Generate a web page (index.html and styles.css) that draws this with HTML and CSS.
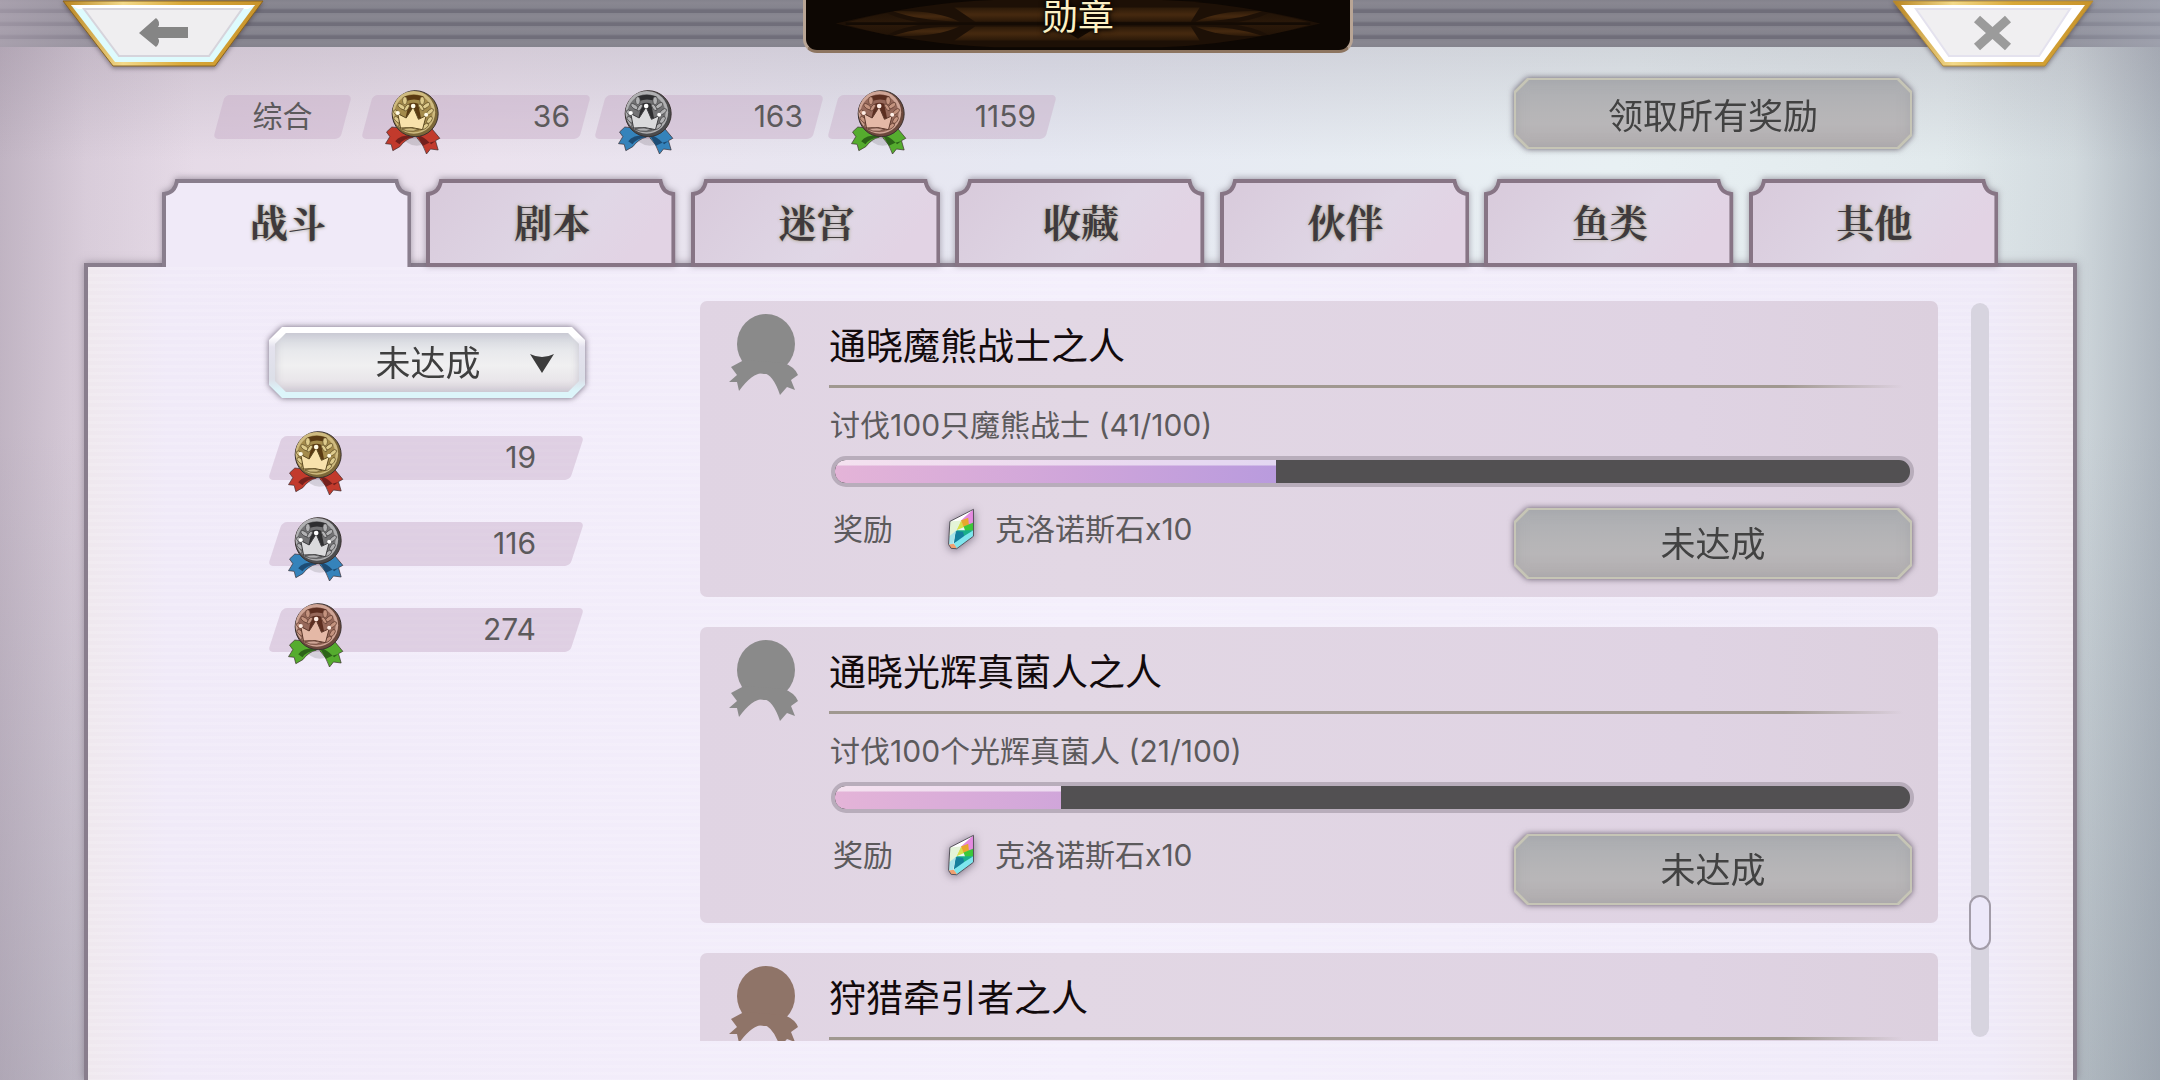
FILE: index.html
```html
<!DOCTYPE html>
<html lang="zh-CN">
<head>
    <meta charset="UTF-8">
    <meta name="viewport" content="width=device-width, initial-scale=1.0">
    <title>勋章</title>
    <link rel="stylesheet" href="styles.css">
</head>
<body>
    <!-- Shared icons -->
    <svg class="sprite" aria-hidden="true">
        <defs>
            <linearGradient id="gold-frame" x1="0" y1="0" x2="1" y2="0">
                <stop offset="0" stop-color="#b88420"/>
                <stop offset="0.3" stop-color="#f3d98a"/>
                <stop offset="0.6" stop-color="#d9a838"/>
                <stop offset="1" stop-color="#c8932b"/>
            </linearGradient>
            <linearGradient id="tab-fill" x1="0" y1="0" x2="1" y2="0.3">
                <stop offset="0" stop-color="#d8cadb"/>
                <stop offset="0.7" stop-color="#e0d7e6"/>
                <stop offset="1" stop-color="#e2d3e4"/>
            </linearGradient>
            <linearGradient id="ornament-fill" x1="0" y1="0" x2="0" y2="1">
                <stop offset="0" stop-color="#2c1a09"/>
                <stop offset="0.45" stop-color="#44280f"/>
                <stop offset="0.55" stop-color="#44280f"/>
                <stop offset="1" stop-color="#2a1808"/>
            </linearGradient>
        </defs>

        <symbol id="medal" viewBox="164 390 170 198">
            <ellipse cx="262" cy="530" rx="40" ry="30" fill="#000" opacity="0.12"/>
            <g fill="var(--ribbon)" stroke="#3a2a2c" stroke-width="2" stroke-linejoin="round">
                <path d="M187 504L171 519L181 533L168 554L185 556L190 575L211 563Q228 540 252 534L240 510Z"/>
                <path d="M302 503L331 538L318 545L326 573L303 570L291 585Q282 555 262 536L270 510Z"/>
            </g>
            <path d="M197 547Q210 528 250 528L252 535Q222 538 210 556Z" fill="var(--ribbon-dark)"/>
            <path d="M262 528Q282 530 305 556L318 546Q300 550 280 560Z" fill="var(--ribbon-dark)"/>
            <circle cx="257" cy="464" r="69" fill="var(--edge)" stroke="#3a3230" stroke-width="3"/>
            <circle cx="253" cy="460" r="64" fill="var(--rim)"/>
            <circle cx="252" cy="463" r="57" fill="var(--face)"/>
            <path d="M226 412Q252 403 282 412L279 426Q252 417 231 426Z" fill="var(--deep)"/>
            <path d="M238 434Q252 428 266 434L276 485H226Z" fill="var(--deep)"/>
            <g fill="var(--leaf)" stroke="var(--line)" stroke-width="2">
                <ellipse cx="226" cy="425" rx="7" ry="12"/>
                <ellipse cx="278" cy="425" rx="7" ry="12"/>
                <ellipse cx="216" cy="443" rx="6" ry="13" transform="rotate(-55 216 443)"/>
                <ellipse cx="232" cy="446" rx="5" ry="12" transform="rotate(35 232 446)"/>
                <ellipse cx="290" cy="440" rx="6" ry="13" transform="rotate(55 290 440)"/>
                <ellipse cx="275" cy="445" rx="5" ry="12" transform="rotate(-35 275 445)"/>
                <ellipse cx="202" cy="462" rx="6" ry="12" transform="rotate(-50 202 462)"/>
                <ellipse cx="302" cy="458" rx="6" ry="12" transform="rotate(50 302 458)"/>
                <ellipse cx="203" cy="482" rx="6" ry="12" transform="rotate(-45 203 482)"/>
                <ellipse cx="300" cy="483" rx="6" ry="12" transform="rotate(35 300 483)"/>
                <ellipse cx="218" cy="505" rx="6" ry="12" transform="rotate(-60 218 505)"/>
                <ellipse cx="287" cy="502" rx="6" ry="12" transform="rotate(50 287 502)"/>
            </g>
            <path d="M205 464L230 477L251 444L267 481L290 470L279 512Q248 502 213 507Z" fill="var(--crown)" stroke="var(--line)" stroke-width="3" stroke-linejoin="round"/>
            <path d="M218 509Q246 503 268 512Q252 519 232 516Z" fill="var(--rim)" stroke="var(--line)" stroke-width="2"/>
            <g fill="var(--shine)">
                <circle cx="205" cy="462" r="6"/>
                <circle cx="251" cy="441" r="7"/>
                <circle cx="290" cy="467" r="6"/>
            </g>
        </symbol>

        <symbol id="medal-shape" viewBox="39 24 70 82">
            <ellipse cx="76" cy="54" rx="29" ry="30"/>
            <path d="M54 70L41 77L47 85L39 92L47 92L49 101Q62 83 73 83Q83 84 90 105L97 97L105 100L101 90L108 85Q105 77 94 73Z"/>
        </symbol>

        <symbol id="gem" viewBox="56 54 84 128">
            <path d="M136 58L64 95L60 165L68 177L85 178L136 140Z" fill="#e8f6f4"/>
            <path d="M136 58L64 95L66 130L98 92Z" fill="#ffffff"/>
            <path d="M136 58L98 92L116 105L136 112Z" fill="#e58ae0"/>
            <path d="M98 92L84 122L108 112Z" fill="#d8e04c"/>
            <path d="M98 92L120 84L122 106L106 112Z" fill="#e8a72c"/>
            <path d="M106 110L136 98V122L112 128Z" fill="#3cc83a"/>
            <path d="M64 95L98 92L80 130L62 150Z" fill="#e4f4d8"/>
            <path d="M84 122L110 122L136 122L118 140L92 142Z" fill="#18b08a"/>
            <path d="M82 124L104 126L110 146L76 162Z" fill="#147f9c"/>
            <path d="M110 138L136 122V140L85 178L76 162Z" fill="#7ee6ee"/>
            <path d="M62 140L82 124L74 164L60 165Z" fill="#a7e4ea"/>
            <path d="M60 165L76 163L86 177L68 177Z" fill="#f0a070"/>
            <path d="M136 58L64 95L60 165L68 177L85 178L136 140Z" fill="none" stroke="#55505a" stroke-width="3" stroke-linejoin="round"/>
        </symbol>

        <symbol id="tab-shape" viewBox="0 0 250 88" preserveAspectRatio="none">
            <path d="M2 86V15Q13 14 15 2H235Q237 14 248 15V86Z" fill="url(#tab-fill)" stroke="#877585" stroke-width="4"/>
        </symbol>
        <symbol id="tab-shape-active" viewBox="0 0 250 88" preserveAspectRatio="none">
            <path d="M2 88V15Q13 14 15 2H235Q237 14 248 15V88" fill="#f0eaf8" stroke="#897e8d" stroke-width="4"/>
        </symbol>
    </svg>

    <header class="topbar">
        <button class="corner-btn" type="button" aria-label="返回">
            <svg viewBox="0 0 202 68">
                <path d="M1 1H201L153 66H51Z" fill="url(#gold-frame)" stroke="#8a6420" stroke-width="1"/>
                <path d="M9 5H193L151 62H53Z" fill="#defbfd"/>
                <path d="M9 5H193L186 9H16Z" fill="#fff"/>
                <path d="M22 9H180L147 56H57Z" fill="#efeef0" stroke="#d6d4dc" stroke-width="2"/>
                <path d="M77 33L94 18Q99 22 96 27H126V38H96Q99 42 94 47Z" fill="#858585"/>
            </svg>
        </button>
        <div class="banner">
            <svg class="banner-art" viewBox="0 0 550 53" preserveAspectRatio="none" aria-hidden="true">
                <path d="M30 25Q120 2 190 0H360Q430 2 520 25Q430 48 360 50H190Q120 48 30 25Z" fill="#1d1006"/>
                <g fill="url(#ornament-fill)">
                    <path d="M150 8H398L389 23H171Z"/>
                    <path d="M150 43H398L389 28H171Z"/>
                    <path d="M88 12Q130 10 155 23Q115 22 88 12Z"/>
                    <path d="M88 38Q130 40 155 28Q115 28 88 38Z"/>
                    <path d="M461 12Q420 10 394 23Q434 22 461 12Z"/>
                    <path d="M461 38Q420 40 394 28Q434 28 461 38Z"/>
                    <path d="M40 24Q60 18 82 14Q98 22 125 25Q98 28 82 37Q60 32 40 26Z" opacity="0.35"/>
                    <path d="M510 24Q490 18 468 14Q452 22 425 25Q452 28 468 37Q490 32 510 26Z" opacity="0.35"/>
                </g>
                <path d="M40 25H510" stroke="#140b04" stroke-width="3"/>
                <path d="M255 28L275 41L295 28Z" fill="#140b04"/>
            </svg>
            <h1>勋章</h1>
        </div>
        <button class="corner-btn" type="button" aria-label="关闭">
            <svg viewBox="0 0 202 68">
                <path d="M1 1H201L153 66H51Z" fill="url(#gold-frame)" stroke="#b08a3a" stroke-width="1"/>
                <path d="M9 5H193L151 62H53Z" fill="#fff"/>
                <path d="M24 9H178L147 56H57Z" fill="#f0eff1" stroke="#e4e2ee" stroke-width="2"/>
                <path d="M85 19L116 47M116 19L85 47" stroke="#9b9b9b" stroke-width="9" fill="none"/>
            </svg>
        </button>
    </header>

    <section class="summary">
        <div class="totals">
            <div class="chip chip-label"><span>综合</span></div>
            <div class="chip"><svg class="medal gold"><use href="#medal"/></svg><span>36</span></div>
            <div class="chip"><svg class="medal silver"><use href="#medal"/></svg><span>163</span></div>
            <div class="chip"><svg class="medal bronze"><use href="#medal"/></svg><span>1159</span></div>
        </div>
        <button class="plate" type="button" disabled><span>领取所有奖励</span></button>
    </section>

    <nav class="tabs">
        <button class="tab active" type="button"><svg><use href="#tab-shape-active"/></svg><span>战斗</span></button>
        <button class="tab" type="button"><svg><use href="#tab-shape"/></svg><span>剧本</span></button>
        <button class="tab" type="button"><svg><use href="#tab-shape"/></svg><span>迷宫</span></button>
        <button class="tab" type="button"><svg><use href="#tab-shape"/></svg><span>收藏</span></button>
        <button class="tab" type="button"><svg><use href="#tab-shape"/></svg><span>伙伴</span></button>
        <button class="tab" type="button"><svg><use href="#tab-shape"/></svg><span>鱼类</span></button>
        <button class="tab" type="button"><svg><use href="#tab-shape"/></svg><span>其他</span></button>
    </nav>

    <main class="panel">
        <aside class="sidebar">
            <div class="filter">
                <select aria-label="筛选">
                    <option>未达成</option>
                </select>
                <svg class="filter-arrow" viewBox="0 0 24 20" aria-hidden="true"><path d="M0 0Q12 6 24 0L12 19Z" fill="#3c3c3c"/></svg>
            </div>
            <div class="chip"><svg class="medal gold"><use href="#medal"/></svg><span>19</span></div>
            <div class="chip"><svg class="medal silver"><use href="#medal"/></svg><span>116</span></div>
            <div class="chip"><svg class="medal bronze"><use href="#medal"/></svg><span>274</span></div>
        </aside>

        <div class="list">
            <article class="card">
                <svg class="card-medal"><use href="#medal-shape"/></svg>
                <div class="card-body">
                    <h2>通晓魔熊战士之人</h2>
                    <p class="goal">讨伐100只魔熊战士 (41/100)</p>
                    <div class="bar" role="progressbar" aria-valuenow="41" aria-valuemax="100"><div class="bar-fill" style="width: 41%"></div></div>
                    <div class="reward">
                        <span class="reward-label">奖励</span>
                        <svg class="gem"><use href="#gem"/></svg>
                        <span>克洛诺斯石x10</span>
                        <button class="plate" type="button" disabled><span>未达成</span></button>
                    </div>
                </div>
            </article>

            <article class="card">
                <svg class="card-medal"><use href="#medal-shape"/></svg>
                <div class="card-body">
                    <h2>通晓光辉真菌人之人</h2>
                    <p class="goal">讨伐100个光辉真菌人 (21/100)</p>
                    <div class="bar" role="progressbar" aria-valuenow="21" aria-valuemax="100"><div class="bar-fill" style="width: 21%"></div></div>
                    <div class="reward">
                        <span class="reward-label">奖励</span>
                        <svg class="gem"><use href="#gem"/></svg>
                        <span>克洛诺斯石x10</span>
                        <button class="plate" type="button" disabled><span>未达成</span></button>
                    </div>
                </div>
            </article>

            <article class="card card-bronze">
                <svg class="card-medal"><use href="#medal-shape"/></svg>
                <div class="card-body">
                    <h2>狩猎牵引者之人</h2>
                </div>
            </article>
        </div>

        <div class="scrollbar"><div class="scroll-thumb"></div></div>
    </main>
</body>
</html>
```
FILE: styles.css
```css
* {
    box-sizing: border-box;
}
body {
    margin: 0;
    height: 100vh;
    overflow: hidden;
    display: flex;
    flex-direction: column;
    font-family: Inter, "Noto Sans CJK SC", sans-serif;
    font-size: 30px;
    color: #5c5a5c;
    background:
        linear-gradient(to bottom, rgba(120,110,125,0.2) 47px, transparent 160px),
        linear-gradient(to right, rgba(150,138,155,0.45), rgba(150,138,155,0.15) 4%, transparent 9%),
        linear-gradient(to left, rgba(130,138,152,0.5), rgba(130,140,152,0.15) 4%, transparent 10%),
        linear-gradient(to bottom, transparent 40%, rgba(120,130,142,0.3)),
        linear-gradient(100deg, #e2d5e2 0%, #ebe2ee 22%, #e6e8f2 45%, #e8f0f3 70%, #dfe7ea 90%, #d3dbdf 100%);
}
button, select {
    font: inherit;
    color: inherit;
    border: none;
    padding: 0;
    background: none;
}
h1, h2, p {
    margin: 0;
    font-weight: 400;
}
.sprite {
    position: absolute;
    width: 0;
    height: 0;
}

/* top bar */
.topbar {
    display: flex;
    justify-content: space-between;
    align-items: flex-start;
    height: 47px;
    flex: none;
    padding: 0 66px 0 62px;
    background:
        linear-gradient(to right, rgba(200,186,202,0.5), transparent 10%, transparent 90%, rgba(180,186,200,0.5)),
        repeating-linear-gradient(to bottom, #84838d 0, #898791 3px, #84838d 8px, #706e7a 10px, #706e7a 13px);
}
.corner-btn {
    width: 202px;
    height: 68px;
    filter: drop-shadow(0 2px 2px rgba(60,50,60,0.5));
}
.corner-btn svg {
    display: block;
    width: 100%;
    height: 100%;
}
.banner {
    position: relative;
    width: 550px;
    height: 53px;
    background: #0d0703;
    border: 3px solid #b9a595;
    border-top: none;
    border-bottom-color: #8d7560;
    border-radius: 0 0 14px 14px;
    overflow: hidden;
    text-align: center;
}
.banner-art {
    position: absolute;
    inset: 0;
    width: 100%;
    height: 100%;
}
.banner h1 {
    position: relative;
    font-size: 36px;
    line-height: 34px;
    color: #fbf0c4;
    text-shadow: 0 0 4px #000, 0 0 6px #000;
}

/* totals row */
.summary {
    display: flex;
    justify-content: space-between;
    align-items: flex-end;
    flex: none;
    margin-top: 31px;
    padding: 0 248px 0 219px;
}
.totals {
    display: flex;
    gap: 15px;
    padding-bottom: 10px;
}
.chip {
    --lean: -15deg;
    position: relative;
    display: flex;
    align-items: center;
    justify-content: flex-end;
    width: 218px;
    height: 44px;
    padding-right: 15px;
}
.chip::before {
    content: "";
    position: absolute;
    inset: 0;
    border-radius: 5px;
    background: rgba(200,174,200,0.45);
    transform: skewX(var(--lean));
}
.chip span {
    position: relative;
    line-height: 40px;
    padding-bottom: 2px;
}
.chip-label {
    width: 127px;
    margin-right: 6px;
    justify-content: center;
    padding: 0;
}
.medal {
    position: absolute;
    left: 17px;
    top: -6px;
    width: 57px;
    height: 66px;
}
.gold {
    --ribbon: #c23a2c;
    --ribbon-dark: #74201c;
    --edge: #7d6838;
    --rim: #cfbb80;
    --face: #a48b4c;
    --deep: #5a3a12;
    --leaf: #decb8c;
    --line: #5c4a22;
    --crown: #f8e2ac;
    --shine: #fffbe8;
}
.silver {
    --ribbon: #3583bb;
    --ribbon-dark: #1d4c74;
    --edge: #4c4c4e;
    --rim: #b0b0b2;
    --face: #737375;
    --deep: #2e2e30;
    --leaf: #b2b2b4;
    --line: #3c3c3e;
    --crown: #dadadc;
    --shine: #ffffff;
}
.bronze {
    --ribbon: #55ac2e;
    --ribbon-dark: #2c6418;
    --edge: #6c483c;
    --rim: #cfa596;
    --face: #96685a;
    --deep: #5c2e20;
    --leaf: #c4937f;
    --line: #5c382c;
    --crown: #e4b8a6;
    --shine: #ffeee6;
}

/* cut-corner grey button */
.plate {
    position: relative;
    width: 398px;
    height: 71px;
    font-size: 35px;
    color: #424242;
    filter: drop-shadow(0 0 3px rgba(70,60,75,0.8));
}
.plate::before, .plate::after {
    content: "";
    position: absolute;
    inset: 0;
    clip-path: polygon(13px 0, calc(100% - 13px) 0, 100% 13px, 100% calc(100% - 13px), calc(100% - 13px) 100%, 13px 100%, 0 calc(100% - 13px), 0 13px);
    background: #c6c5b6;
}
.plate::after {
    inset: 2px;
    background: linear-gradient(to bottom, #acaeb2, #b6b5b7 50%, #b8b6b8 65%, #b2aeb0);
    box-shadow: inset 0 0 12px rgba(160,160,164,0.5);
}
.plate span {
    position: relative;
    z-index: 1;
}

/* tabs */
.tabs {
    position: relative;
    z-index: 1;
    display: flex;
    gap: 15px;
    flex: none;
    margin: 30px 162px -4px;
}
.tab {
    position: relative;
    flex: 1;
    height: 88px;
    padding: 0 0 5px 2px;
    font-family: "Noto Serif CJK SC", "Noto Sans CJK SC", serif;
    font-size: 38px;
    font-weight: 700;
    color: #3f3a3c;
    text-shadow: 0 0 3px #a9a498, 0 0 4px #c4bfb0;
}
.tab svg {
    position: absolute;
    left: 0;
    top: 0;
    width: 100%;
    height: 100%;
    filter: drop-shadow(0 -1px 3px rgba(90,80,95,0.5));
}
.tab.active svg {
    clip-path: inset(-8px -8px 0);
}
.tab span {
    position: relative;
}

/* main panel */
.panel {
    display: flex;
    flex: 1;
    min-height: 0;
    margin: 0 83px 0 84px;
    padding: 34px 84px 39px 181px;
    border: 4px solid #897e8d;
    border-bottom: none;
    background:
        repeating-linear-gradient(to bottom, rgba(255,255,255,0.12) 0, rgba(255,255,255,0.12) 3px, transparent 3px, transparent 7px),
        linear-gradient(to right, #efe8ee, #f0eaf8 4%, #f4effc 50%, #efeaf8 96%, #ede6ee);
    box-shadow: 0 0 8px rgba(90,80,95,0.5);
}
.sidebar {
    width: 316px;
    flex: none;
    margin-right: 115px;
    padding-top: 26px;
}
.filter {
    position: relative;
    height: 71px;
    margin-bottom: 38px;
    filter: drop-shadow(0 0 3px rgba(80,70,90,0.8));
}
.filter::before {
    content: "";
    position: absolute;
    inset: 0;
    clip-path: polygon(13px 0, calc(100% - 13px) 0, 100% 13px, 100% calc(100% - 13px), calc(100% - 13px) 100%, 13px 100%, 0 calc(100% - 13px), 0 13px);
    background: linear-gradient(to bottom, #fff 10px, #e4e2ee 20px, #dcdfe8 52px, #dcf5fa 64px);
}
.filter select {
    position: relative;
    appearance: none;
    width: 304px;
    height: 59px;
    margin: 6px;
    padding-left: 2px;
    font-size: 35px;
    color: #3f3f3f;
    text-align: center;
    text-align-last: center;
    clip-path: polygon(11px 0, calc(100% - 11px) 0, 100% 11px, 100% calc(100% - 11px), calc(100% - 11px) 100%, 11px 100%, 0 calc(100% - 11px), 0 11px);
    background: linear-gradient(to bottom, #cfd2da, #e8e9ec 30%, #f0f0f1 55%, #e9e6ea 80%, #d6d0d8);
    box-shadow: inset 0 0 8px #c4c2cc;
}
.filter-arrow {
    position: absolute;
    right: 31px;
    top: 27px;
    width: 24px;
    height: 20px;
}
.sidebar .chip {
    --lean: -18deg;
    width: 302px;
    margin: 0 7px 42px 6px;
    padding-right: 41px;
}
.sidebar .medal {
    left: 12px;
}

/* achievement cards */
.list {
    flex: 1;
    min-width: 0;
    overflow: hidden;
}
.card {
    display: flex;
    gap: 30px;
    height: 296px;
    margin-bottom: 30px;
    padding: 13px 24px 18px 29px;
    border-radius: 7px;
    background: linear-gradient(to right, #e0d4e3, #e2d7e4 30%, #dfd3e3 80%, #dcd0de);
}
.card-medal {
    width: 70px;
    height: 82px;
    flex: none;
    fill: #8a8a8a;
}
.card-bronze .card-medal {
    fill: #8f7468;
}
.card-body {
    flex: 1;
    min-width: 0;
}
.card h2 {
    padding-bottom: 8px;
    font-size: 37px;
    line-height: 66px;
    color: #120a0c;
    background: linear-gradient(to right, #a09890 88%, transparent 99%) bottom / 100% 3px no-repeat;
}
.goal {
    margin: 17px 0 11px 1px;
    line-height: 40px;
}
.bar {
    height: 31px;
    margin-left: 2px;
    border: 4px solid #b8adbb;
    border-radius: 15px;
    background: #525052;
    overflow: hidden;
}
.bar-fill {
    height: 100%;
    border-radius: 10px 0 0 10px;
    background:
        linear-gradient(to bottom, rgba(255,255,255,0.6) 5px, transparent 6px),
        linear-gradient(to right, #e4b4d8, #cfa5da 240px, #b79ade 460px);
}
.reward {
    display: flex;
    align-items: flex-start;
    margin: 21px 2px 0 4px;
    line-height: 42px;
}
.reward-label {
    margin-right: 54px;
}
.reward .plate {
    margin-left: auto;
}
.gem {
    width: 28px;
    height: 42px;
    margin-right: 20px;
    filter: drop-shadow(0 1px 4px rgba(60,50,70,0.6));
}

/* scrollbar */
.scrollbar {
    position: relative;
    width: 18px;
    flex: none;
    margin: 2px 0 4px 33px;
    border-radius: 9px;
    background: #d7d4df;
}
.scroll-thumb {
    position: absolute;
    left: -2px;
    right: -2px;
    bottom: 87px;
    height: 55px;
    border: 2px solid #a29ca8;
    border-radius: 11px;
    background: #ece8f9;
}
```
